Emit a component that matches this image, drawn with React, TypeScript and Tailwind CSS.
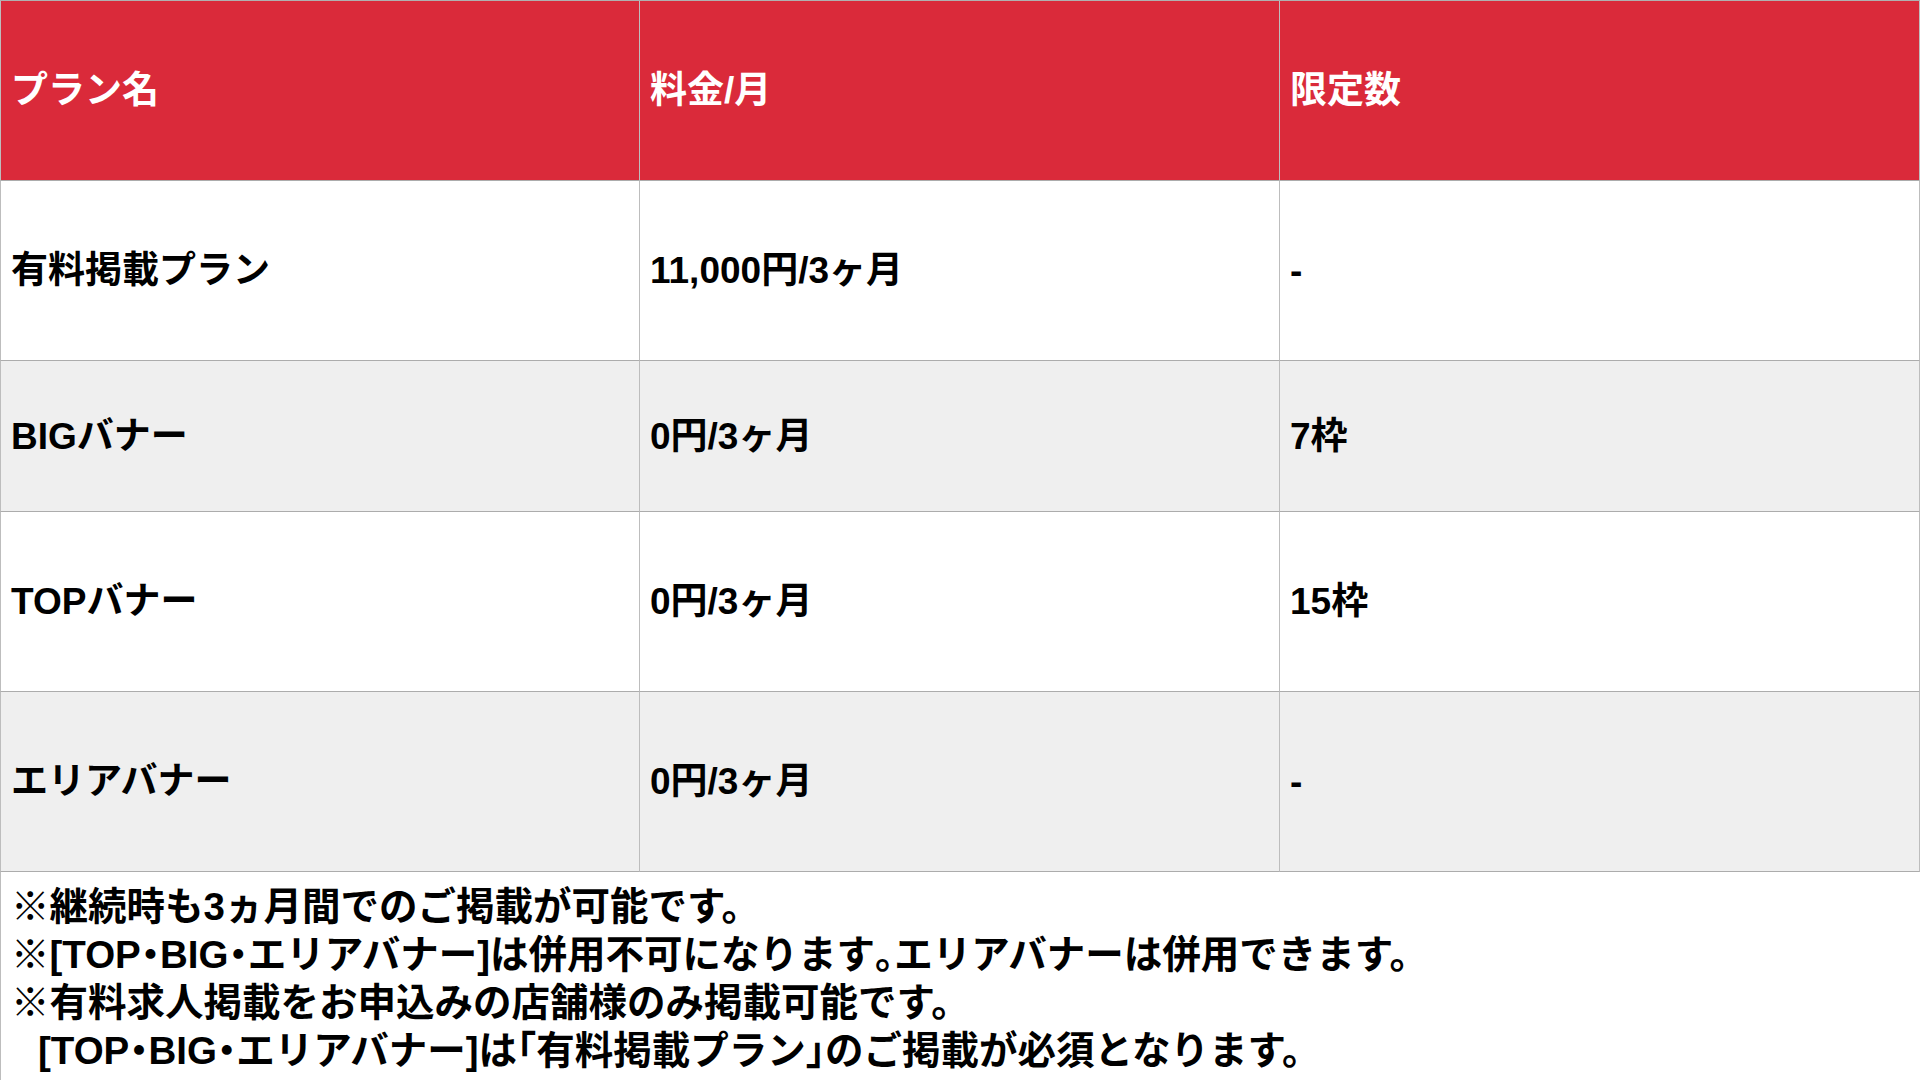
import type { ReactNode } from 'react';

type Row = {
  name: string;
  price: string;
  limit: string;
  height: string;
  shaded: boolean;
};

const rows: Row[] = [
  { name: '有料掲載プラン', price: '11,000円/3ヶ月', limit: '-', height: 'h-[180px]', shaded: false },
  { name: 'BIGバナー', price: '0円/3ヶ月', limit: '7枠', height: 'h-[151px]', shaded: true },
  { name: 'TOPバナー', price: '0円/3ヶ月', limit: '15枠', height: 'h-[180px]', shaded: false },
  { name: 'エリアバナー', price: '0円/3ヶ月', limit: '-', height: 'h-[180px]', shaded: true },
];

function Cell({ children, first, className }: { children: ReactNode; first?: boolean; className: string }) {
  return (
    <div
      className={`flex items-center border-b border-r border-b-[#acacac] border-r-[#bdbdbd] pl-[10px] ${
        first ? 'border-l border-l-[#bdbdbd]' : ''
      } ${className}`}
    >
      {children}
    </div>
  );
}

// half-width punctuation, as in the source sheet
function H({ children }: { children: ReactNode }) {
  return <span className="[font-feature-settings:'halt']">{children}</span>;
}

export default function App() {
  return (
    <div className="h-[1080px] w-[1920px] overflow-hidden bg-white font-['Liberation_Sans','Noto_Sans_CJK_JP',sans-serif] text-[37px] font-bold leading-none text-black">
      <div className="grid grid-cols-3 border-t border-t-[#b0b0b0]">
        {['プラン名', '料金/月', '限定数'].map((label, i) => (
          <Cell key={label} first={i === 0} className="h-[180px] bg-[#da2a3a] text-white">
            {label}
          </Cell>
        ))}
        {rows.map((row) => {
          const bg = row.shaded ? 'bg-[#efefef]' : 'bg-white';
          return [
            <Cell key={`${row.name}-n`} first className={`${row.height} ${bg}`}>
              {row.name}
            </Cell>,
            <Cell key={`${row.name}-p`} className={`${row.height} ${bg}`}>
              {row.price}
            </Cell>,
            <Cell key={`${row.name}-l`} className={`${row.height} ${bg}`}>
              {row.limit}
            </Cell>,
          ];
        })}
      </div>

      <div className="h-full border-l border-l-[#bdbdbd] pl-[10px] pt-[11px] text-[38.5px] leading-[48px]">
        <p>※継続時も3ヵ月間でのご掲載が可能です。</p>
        <p>
          ※[TOP<H>・</H>BIG<H>・</H>エリアバナー]は併用不可になります<H>。</H>エリアバナーは併用できます。
        </p>
        <p>※有料求人掲載をお申込みの店舗様のみ掲載可能です。</p>
        <p className="pl-[27px]">
          [TOP<H>・</H>BIG<H>・</H>エリアバナー]は<H>「</H>有料掲載プラン<H>」</H>のご掲載が必須となります。
        </p>
      </div>
    </div>
  );
}
